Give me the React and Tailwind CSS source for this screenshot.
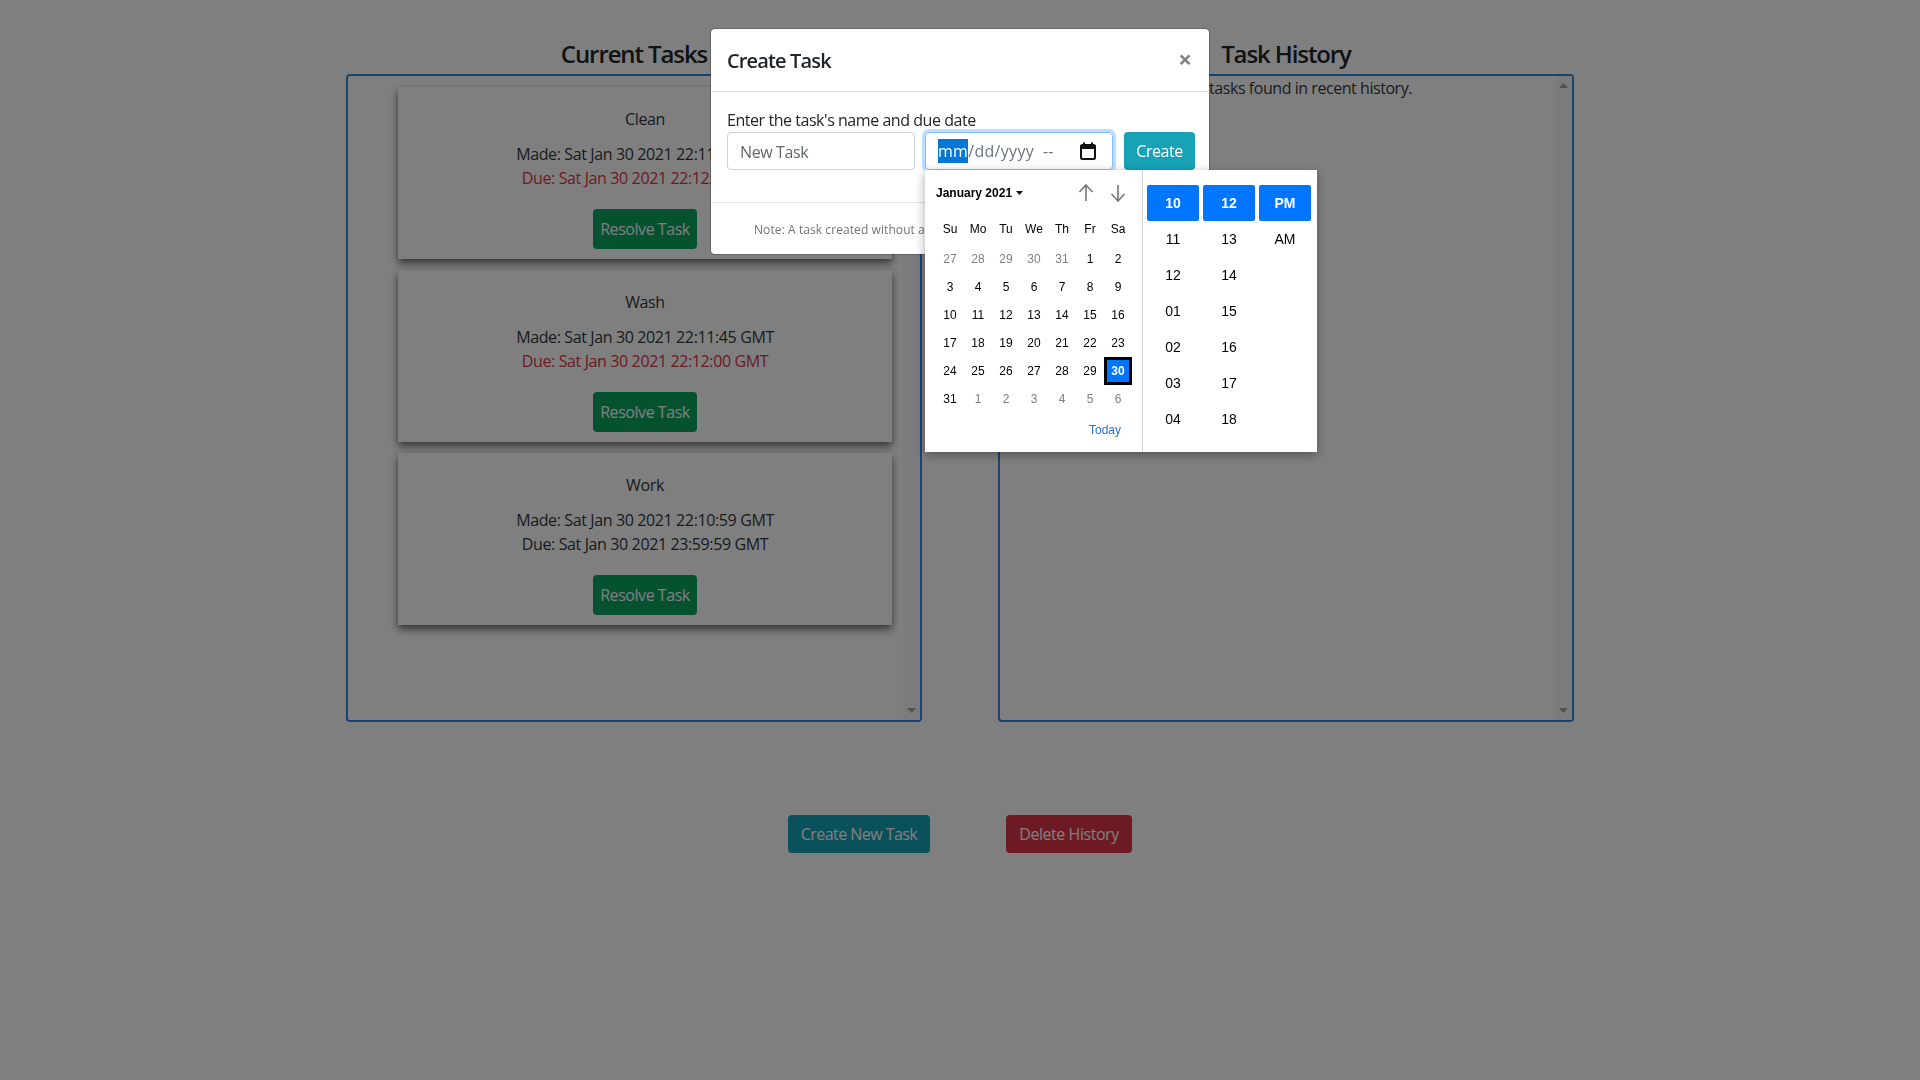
import React from "react";

const sans = { fontFamily: '"Open Sans", sans-serif' };

const tasks = [
  {
    name: "Clean",
    made: "Made: Sat Jan 30 2021 22:11:45 GMT",
    due: "Due: Sat Jan 30 2021 22:12:00 GMT",
    late: true,
  },
  {
    name: "Wash",
    made: "Made: Sat Jan 30 2021 22:11:45 GMT",
    due: "Due: Sat Jan 30 2021 22:12:00 GMT",
    late: true,
  },
  {
    name: "Work",
    made: "Made: Sat Jan 30 2021 22:10:59 GMT",
    due: "Due: Sat Jan 30 2021 23:59:59 GMT",
    late: false,
  },
];

const weekDays = ["Su", "Mo", "Tu", "We", "Th", "Fr", "Sa"];
const prevDays = [27, 28, 29, 30, 31];
const monthDays = Array.from({ length: 31 }, (_, i) => i + 1);
const nextDays = [1, 2, 3, 4, 5, 6];

const hours = ["11", "12", "01", "02", "03", "04"];
const minutes = ["13", "14", "15", "16", "17", "18"];

const ScrollTrack = () => (
  <div className="w-[17px] shrink-0 flex flex-col justify-between items-center bg-[#f6f6f6] py-[7px]">
    <svg width="9" height="5" viewBox="0 0 9 5">
      <path d="M4.5 0L9 5H0z" fill="#a3a3a3" />
    </svg>
    <svg width="9" height="5" viewBox="0 0 9 5">
      <path d="M0 0h9L4.5 5z" fill="#a3a3a3" />
    </svg>
  </div>
);

const TaskCard = ({ task }) => (
  <div className="w-[494px] h-[172px] ml-[50px] mb-[11px] shrink-0 flex flex-col items-center bg-white shadow-[0_4px_8px_0_rgba(0,0,0,0.6)] pt-[20px] text-[#33383d]">
    <p className="h-6 leading-6 tracking-[-0.38px]">{task.name}</p>
    <p className="h-6 leading-6 mt-[11px] tracking-[-0.38px]">{task.made}</p>
    <p className={`h-6 leading-6 tracking-[-0.38px] ${task.late ? "text-[#dc3545]" : ""}`}>{task.due}</p>
    <button className="w-[104px] h-[40px] mt-[19px] rounded-[4px] bg-[#0aa563] text-white tracking-[-0.45px]">
      Resolve Task
    </button>
  </div>
);

const Calendar = () => (
  <div className="w-[218px] h-full border-r border-[#d0d0d0] pl-[11px] pt-[8px]">
    <div className="h-[30px] flex items-center">
      <span className="text-xs font-bold text-black">January 2021</span>
      <svg className="ml-[4px]" width="7" height="4" viewBox="0 0 7 4">
        <path d="M0 0h7L3.5 4z" fill="#111" />
      </svg>
      <svg className="ml-[55px]" width="16" height="18" viewBox="0 0 16 18" fill="none" stroke="#777" strokeWidth="1.6">
        <path d="M8 17V1M1.5 8L8 1l6.5 7" />
      </svg>
      <svg className="ml-[16px]" width="16" height="18" viewBox="0 0 16 18" fill="none" stroke="#777" strokeWidth="1.6">
        <path d="M8 1v16M1.5 10L8 17l6.5-7" />
      </svg>
    </div>
    <div className="grid grid-cols-[repeat(7,28px)] auto-rows-[28px] mt-[7px] text-xs text-black text-center leading-[28px]">
      {weekDays.map((d) => (
        <div key={d}>{d}</div>
      ))}
    </div>
    <div className="grid grid-cols-[repeat(7,28px)] auto-rows-[28px] mt-[2px] text-xs text-black text-center leading-[28px]">
      {prevDays.map((d) => (
        <div key={`p${d}`} className="text-[#808080]">{d}</div>
      ))}
      {monthDays.map((d) =>
        d === 30 ? (
          <div key={d} className="bg-[#0075ff] border-[3px] border-black text-white font-bold leading-[22px]">{d}</div>
        ) : (
          <div key={d}>{d}</div>
        )
      )}
      {nextDays.map((d) => (
        <div key={`n${d}`} className="text-[#808080]">{d}</div>
      ))}
    </div>
    <div className="flex justify-end pr-[21px] mt-[9px]">
      <span className="text-xs leading-4 text-[#2a6fd6]">Today</span>
    </div>
  </div>
);

const TimeColumn = ({ selected, items }) => (
  <div className="w-[52px] flex flex-col text-sm text-black">
    <div className="h-[36px] flex items-center justify-center rounded-[2px] bg-[#0075ff] text-white font-bold">{selected}</div>
    {items.map((t) => (
      <div key={t} className="h-[36px] flex items-center justify-center">{t}</div>
    ))}
  </div>
);

const DatePopup = () => (
  <div
    className="absolute left-[214px] top-[141px] w-[392px] h-[282px] flex bg-white shadow-[0_3px_10px_rgba(0,0,0,0.35)]"
    style={{ fontFamily: '"Liberation Sans", Arial, sans-serif' }}
  >
    <Calendar />
    <div className="flex gap-[4px] pl-[4px] pt-[15px]">
      <TimeColumn selected="10" items={hours} />
      <TimeColumn selected="12" items={minutes} />
      <TimeColumn selected="PM" items={["AM"]} />
    </div>
  </div>
);

const CreateModal = () => (
  <div className="relative w-[500px] h-[227px] mt-[28px] border border-black/20 rounded-[5px] bg-white bg-clip-padding text-[#212529]">
    <div className="h-[63px] flex items-center justify-between border-b border-[#dee2e6] pl-[16px] pr-[17px]">
      <h5 className="text-xl leading-7 mt-[2px] font-semibold tracking-[-0.85px]">Create Task</h5>
      <span className="text-2xl font-bold leading-none text-[#808080] -mt-[2px]">×</span>
    </div>
    <div className="h-[111px] px-[16px] pt-[16px] border-b border-[#dee2e6]">
      <p className="h-6 leading-6 tracking-[-0.45px]">Enter the task's name and due date</p>
      <div className="flex">
        <div className="w-[188px] h-[38px] shrink-0 flex items-center border border-[#ced4da] rounded-[4px] px-[12px] pt-[2px] text-[#5f666d] tracking-[-0.38px]">
          New Task
        </div>
        <div className="w-[188px] h-[38px] shrink-0 ml-[10px] flex items-center border border-[#80bdff] rounded-[4px] shadow-[0_0_0_3px_rgba(0,123,255,0.25)] pl-[12px] text-[#6c757d]">
          <span className="bg-[#0078d7] text-white tracking-[0.3px]">mm</span>
          <span className="tracking-[0.3px] whitespace-pre">/dd/yyyy  --</span>
          <svg className="ml-auto mr-[16px]" width="16" height="18" viewBox="0 0 16 18" fill="none">
            <rect x="1" y="3" width="14" height="14" rx="1.5" stroke="#111" strokeWidth="2" />
            <path d="M1 4h14v3H1z" fill="#111" />
            <path d="M4 0.5v3M12 0.5v3" stroke="#111" strokeWidth="2" />
          </svg>
        </div>
        <button className="w-[71px] h-[38px] shrink-0 ml-[11px] rounded-[4px] bg-[#17a2b8] text-white tracking-[-0.45px]">
          Create
        </button>
      </div>
    </div>
    <div className="h-[52px] pl-[43px] pt-[15px] whitespace-nowrap text-xs leading-[24px] tracking-[0.08px] text-[#6c757d]">
      Note: A task created without a
    </div>
    <DatePopup />
  </div>
);

const App = () => {
  return (
    <div className="relative w-full h-[1080px] overflow-hidden bg-white text-[#212529]" style={sans}>
      <div className="flex justify-center gap-[76px] pt-[38px]">
        <section className="w-[576px]">
          <h3 className="h-[36px] leading-[32px] text-2xl font-semibold text-center tracking-[-1.1px]">Current Tasks</h3>
          <div className="h-[648px] flex border-2 border-[#3585e6] rounded-[4px]">
            <div className="flex-1 flex flex-col pt-[11px] overflow-hidden">
              {tasks.map((t) => (
                <TaskCard key={t.name} task={t} />
              ))}
            </div>
            <ScrollTrack />
          </div>
        </section>
        <section className="w-[576px]">
          <h3 className="h-[36px] leading-[32px] text-2xl font-semibold text-center tracking-[-1.1px]">Task History</h3>
          <div className="h-[648px] flex border-2 border-[#3585e6] rounded-[4px]">
            <p className="flex-1 text-right leading-6 pr-[143px] tracking-[-0.45px] text-[#33383d]">No recorded tasks found in recent history.</p>
            <ScrollTrack />
          </div>
        </section>
      </div>

      <div className="flex justify-center gap-[76px] mt-[93px]">
        <button className="w-[142px] h-[38px] rounded-[4px] bg-[#17a2b8] text-white tracking-[-0.55px]">Create New Task</button>
        <button className="w-[126px] h-[38px] rounded-[4px] bg-[#dc3545] text-white tracking-[-0.45px]">Delete History</button>
      </div>

      {/* modal backdrop */}
      <div className="fixed inset-0 flex justify-center bg-black/50">
        <CreateModal />
      </div>
    </div>
  );
};

export default App;
